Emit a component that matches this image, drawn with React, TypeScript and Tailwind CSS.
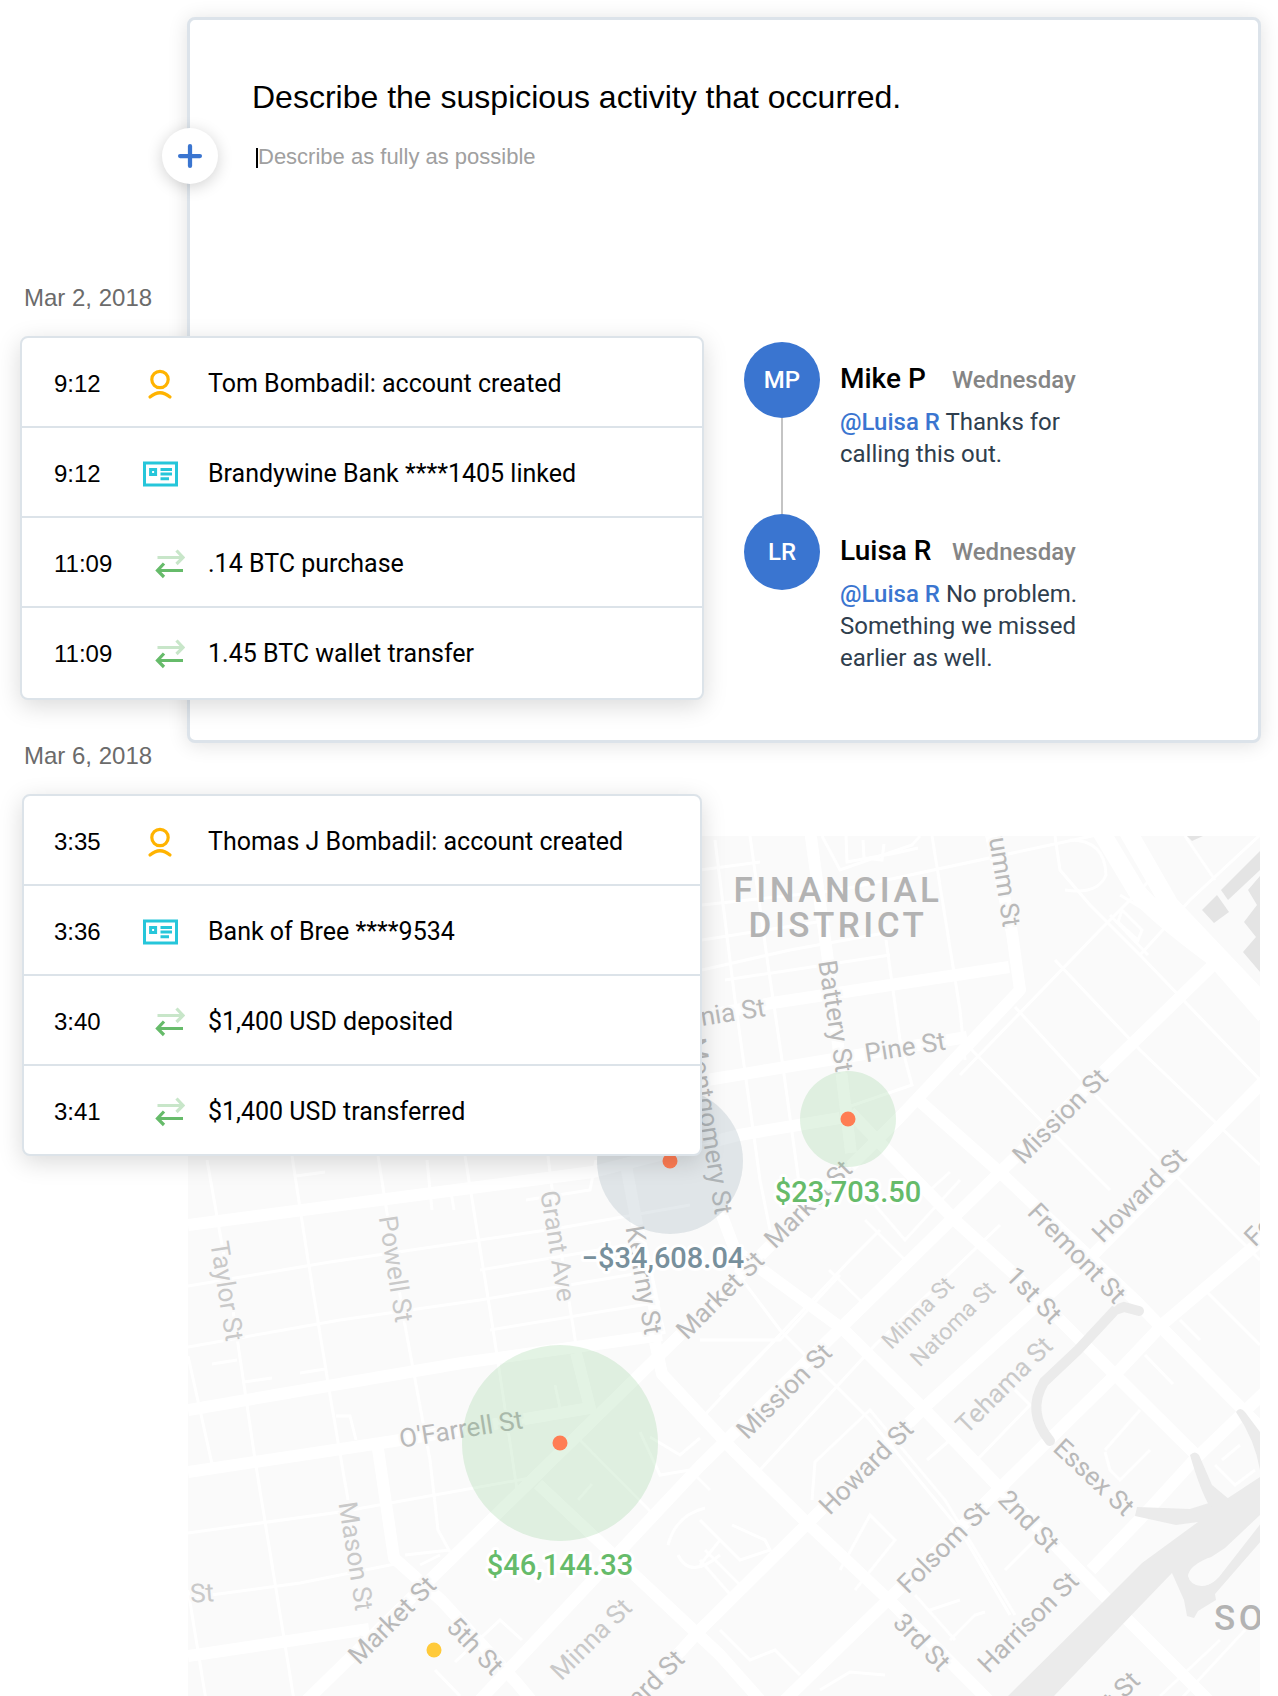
import React from 'react';
import { Plus } from 'lucide-react';

type EventKind = 'account' | 'bank' | 'transfer';

interface TimelineEvent {
    time: string;
    kind: EventKind;
    label: string;
}

interface Comment {
    initials: string;
    author: string;
    day: string;
    mention: string;
    text: string;
}

interface StreetLabel {
    name: string;
    x: number;
    y: number;
    angle: number;
    minor?: boolean;
    small?: boolean;
}

const FIRST_DAY: TimelineEvent[] = [
    { time: '9:12', kind: 'account', label: 'Tom Bombadil: account created' },
    { time: '9:12', kind: 'bank', label: 'Brandywine Bank ****1405 linked' },
    { time: '11:09', kind: 'transfer', label: '.14 BTC purchase' },
    { time: '11:09', kind: 'transfer', label: '1.45 BTC wallet transfer' },
];

const SECOND_DAY: TimelineEvent[] = [
    { time: '3:35', kind: 'account', label: 'Thomas J Bombadil: account created' },
    { time: '3:36', kind: 'bank', label: 'Bank of Bree ****9534' },
    { time: '3:40', kind: 'transfer', label: '$1,400 USD deposited' },
    { time: '3:41', kind: 'transfer', label: '$1,400 USD transferred' },
];

const COMMENTS: Comment[] = [
    {
        initials: 'MP',
        author: 'Mike P',
        day: 'Wednesday',
        mention: '@Luisa R',
        text: 'Thanks for calling this out.',
    },
    {
        initials: 'LR',
        author: 'Luisa R',
        day: 'Wednesday',
        mention: '@Luisa R',
        text: 'No problem. Something we missed earlier as well.',
    },
];

const WIDE_ROADS = [
    'M188 1225L593 1172L739 1135L840 1118',
    'M188 1410L462 1363L662 1335',
    'M188 1472L394 1441L590 1408L576 1353',
    'M188 1656L369 1629',
    'M378 1449L394 1558L442 1601L517 1683L531 1700',
    'M305 1702L676 1339L900 1117L1020 990L1012 933L990 830',
    'M810 830L827 953L851 1153',
    'M695 1018L772 1003L1009 967',
    'M695 1082L840 1058L967 1037',
    'M480 1700L700 1466L955 1216L1215 963',
    'M636 1700L700 1630L811 1520L929 1403L1046 1297L1091 1257L1278 1067',
    'M785 1700L895 1593L995 1493L1113 1377L1164 1323L1270 1233',
    'M1091 1570L1142 1517L1194 1460L1270 1387',
    'M538 1484L640 1580L720 1655L760 1700',
    'M655 1342L662 1374L733 1450L807 1523L892 1603L988 1700',
    'M718 1205L735 1250L844 1330L925 1410L995 1483L1105 1597L1208 1700',
    'M850 1112L877 1140L958 1223L1013 1273L1080 1340L1194 1453',
    'M915 1097L1005 1177L1135 1300L1161 1327L1270 1437',
    'M625 1160L640 1240L660 1335',
];

const THIN_ROADS = [
    'M207 1160L230 1290L256 1466L294 1700',
    'M292 1156L308 1260L330 1395L348 1500',
    'M378 1156L404 1320L430 1460L438 1530L450 1552',
    'M427 1160L432 1210M450 1186L454 1210',
    'M465 1156L490 1310L500 1375L517 1490',
    'M548 1156L556 1220L576 1345',
    'M188 1286L330 1262L560 1228L690 1205',
    'M188 1347L340 1320L480 1300L640 1273',
    'M490 1330L660 1302M480 1270L640 1243',
    'M188 1533L340 1512L530 1478',
    'M188 1598L300 1583L400 1563',
    'M188 1356L212 1464M188 1590L206 1700',
    'M336 1416L350 1416L356 1440',
    'M244 1382L272 1378M300 1373L325 1369M212 1364L237 1360',
    'M296 1176L325 1172M526 1200L590 1190L596 1160',
    'M555 1385L560 1408M578 1500L592 1484',
    'M580 1440L650 1511M650 1437L680 1455L700 1438',
    'M640 1432L660 1475L690 1470L710 1490',
    'M668 1545Q676 1515 705 1508M678 1555Q690 1580 720 1555',
    'M405 1555L450 1550M420 1565L440 1555',
    'M455 1662L500 1620L522 1640M435 1670L460 1696',
    'M702 905L840 890L1050 845L1120 830',
    'M702 970L790 950L890 932M725 980L890 955',
    'M715 840L735 1000L760 1180L770 1230',
    'M750 836L768 965L782 1060L800 1190',
    'M822 836L840 870L912 845L920 836',
    'M846 836L847 862L896 853L918 848',
    'M863 840L864 858L882 860L884 844',
    'M932 836L960 1010L965 1060',
    'M886 940L900 1040L912 1085L845 1108',
    'M702 940L830 920M700 870L760 862',
    'M960 1075L1100 930L1150 880',
    'M1055 836L1060 870L1090 905L1140 955L1260 1080',
    'M1070 840Q1105 840 1106 875Q1098 895 1065 890',
    'M1120 895L1170 925M1110 915L1148 955M1122 910L1142 930L1138 940L1118 922Z',
    'M1055 960L1140 1050L1260 1165',
    'M1015 1007L1100 1100L1210 1210L1260 1260',
    'M970 1048L1060 1140L1110 1190',
    'M1140 955L1190 900L1260 835',
    'M1185 836L1215 880',
    'M898 1155L930 1190L950 1172M875 1205L905 1240L960 1180',
    'M829 1270L865 1305M865 1220L910 1265',
    'M735 1270L780 1330L870 1420L960 1530L1010 1615',
    'M700 1340L780 1340L840 1275M780 1335L720 1395',
    'M700 1420L850 1260L880 1230',
    'M760 1470L875 1345L1000 1225',
    'M812 1500L815 1462L870 1410L945 1500L1015 1615',
    'M840 1570L870 1515L895 1540L855 1590',
    'M927 1460L950 1440M977 1460L1030 1405L1010 1385',
    'M1105 1450L1140 1410M1105 1452L1110 1470L1120 1480L1150 1450',
    'M1145 1355L1173 1384M1180 1320L1200 1340M1205 1290L1260 1345',
    'M1005 1570L1040 1535M1122 1612L1180 1670',
    'M1180 1700L1245 1630M1160 1696L1220 1640',
    'M1222 1460L1240 1445M1215 1465L1235 1485L1255 1470',
    'M915 1595L955 1640M930 1610L960 1600M950 1640L975 1615L985 1612',
    'M700 1520L740 1560L770 1550L765 1540L732 1525',
    'M700 1560L735 1600M705 1550L745 1590M720 1540L700 1565',
    'M720 1630L750 1660L775 1650L800 1675',
    'M700 1640L760 1700M820 1690L850 1672L885 1675',
];

const LABELS: StreetLabel[] = [
    { name: 'Taylor St', x: 227, y: 1291, angle: 81, minor: true },
    { name: 'Powell St', x: 396, y: 1269, angle: 81, minor: true },
    { name: 'Grant Ave', x: 558, y: 1246, angle: 81, minor: true },
    { name: 'Kearny St', x: 644, y: 1280, angle: 80 },
    { name: 'Mason St', x: 356, y: 1556, angle: 81, minor: true },
    { name: "O'Farrell St", x: 461, y: 1429, angle: -9 },
    { name: 'Market St', x: 392, y: 1620, angle: -45 },
    { name: '5th St', x: 475, y: 1646, angle: 46 },
    { name: 'Minna St', x: 591, y: 1639, angle: -45, minor: true },
    { name: 'Howard St', x: 637, y: 1697, angle: -45 },
    { name: 'St', x: 202, y: 1593, angle: -4, minor: true },
    { name: 'Market St', x: 720, y: 1295, angle: -45 },
    { name: 'Market St', x: 808, y: 1204, angle: -45 },
    { name: 'Mission St', x: 1060, y: 1116, angle: -45 },
    { name: 'Howard St', x: 1139, y: 1195, angle: -45 },
    { name: 'Fremont St', x: 1077, y: 1253, angle: 46 },
    { name: '1st St', x: 1034, y: 1295, angle: 46 },
    { name: 'Minna St', x: 917, y: 1312, angle: -45, minor: true, small: true },
    { name: 'Natoma St', x: 952, y: 1323, angle: -45, minor: true, small: true },
    { name: 'Tehama St', x: 1004, y: 1385, angle: -45, minor: true },
    { name: 'Mission St', x: 784, y: 1391, angle: -45 },
    { name: 'Howard St', x: 866, y: 1467, angle: -45 },
    { name: 'Essex St', x: 1094, y: 1477, angle: 43 },
    { name: '2nd St', x: 1029, y: 1521, angle: 46 },
    { name: 'Folsom St', x: 943, y: 1547, angle: -45 },
    { name: '3rd St', x: 922, y: 1642, angle: 46 },
    { name: 'Harrison St', x: 1028, y: 1622, angle: -45 },
    { name: 'Bryant St', x: 1098, y: 1713, angle: -45 },
    { name: 'Folsom St', x: 1290, y: 1200, angle: -45 },
    { name: 'Drumm St', x: 1003, y: 869, angle: 81 },
    { name: 'Battery St', x: 836, y: 1016, angle: 81 },
    { name: 'California St', x: 695, y: 1018, angle: -9 },
    { name: 'Pine St', x: 905, y: 1047, angle: -9 },
    { name: 'Montgomery St', x: 710, y: 1126, angle: 81 },
];

const AccountIcon = () => (
    <svg width="36" height="32" viewBox="0 0 36 32" fill="none" aria-hidden="true">
        <g stroke="#ffb300" strokeWidth="3.2" strokeLinecap="round">
            <circle cx="18" cy="11.5" r="8.2" />
            <path d="M8 29Q18 20.5 28 29" />
        </g>
    </svg>
);

const BankIcon = () => (
    <svg width="36" height="26" viewBox="0 0 36 26" fill="none" aria-hidden="true">
        <g stroke="#26c6da" strokeWidth="3">
            <rect x="2.5" y="2" width="32" height="22" />
            <rect x="8.6" y="8.5" width="5" height="5" />
            <path d="M18.5 8.5H30M18.5 13H30M18.5 17.8H27" />
        </g>
    </svg>
);

const TransferIcon = () => (
    <svg width="30" height="30" viewBox="0 0 30 30" fill="none" aria-hidden="true">
        <g strokeWidth="3.2">
            <path d="M2.5 8.5H28M21.5 1.5L28 8.5L21.5 15" stroke="#c8e6c9" />
            <path d="M28 21.5H2.5M9 14.5L2.5 21.5L9 28" stroke="#66bb6a" />
        </g>
    </svg>
);

const EventIcon: React.FC<{ kind: EventKind }> = ({ kind }) => {
    switch (kind) {
        case 'account':
            return <AccountIcon />;
        case 'bank':
            return <BankIcon />;
        default:
            return <TransferIcon />;
    }
};

const EventList: React.FC<{ events: TimelineEvent[] }> = ({ events }) => (
    <ul>
        {events.map((event) => (
            <li
                key={event.label}
                className="box-content flex h-[84px] items-center border-b-2 border-[#dce3e9] pt-1 pl-[30px] last:border-b-0"
            >
                <time className="w-[88px] shrink-0 font-['Liberation_Sans',sans-serif] text-2xl">
                    {event.time}
                </time>
                <span
                    className={`flex w-[43px] shrink-0 ${
                        event.kind === 'transfer' ? 'justify-end' : 'justify-start'
                    }`}
                >
                    <EventIcon kind={event.kind} />
                </span>
                <span className="ml-[23px] text-[25px]">{event.label}</span>
            </li>
        ))}
    </ul>
);

const CommentThread = () => (
    <ol className="ml-[554px]">
        {COMMENTS.map((comment, index) => (
            <li key={comment.author} className="flex gap-5">
                <div className="flex flex-col items-center">
                    <div className="flex size-[76px] shrink-0 items-center justify-center rounded-full bg-[#3a75d0] text-2xl font-medium text-white">
                        {comment.initials}
                    </div>
                    {index < COMMENTS.length - 1 && (
                        <div className="w-[2px] grow bg-[#c4c4c4]" />
                    )}
                </div>
                <div className="h-[172px] pt-[19px]">
                    <div className="flex items-baseline leading-9">
                        <h2 className="w-28 text-[28px] font-medium">{comment.author}</h2>
                        <span className="text-2xl font-medium text-[#858585]">
                            {comment.day}
                        </span>
                    </div>
                    <p className="mt-[9px] w-60 text-2xl leading-8 text-[#2f3e4d]">
                        <a href="#luisa" className="font-medium text-[#3a75d0]">
                            {comment.mention}
                        </a>{' '}
                        {comment.text}
                    </p>
                </div>
            </li>
        ))}
    </ol>
);

const ActivityMap = () => (
    <svg
        viewBox="188 836 1072 860"
        preserveAspectRatio="xMinYMin slice"
        className="h-[860px] w-full bg-[#fafafa]"
        role="img"
        aria-label="Map of account activity"
    >
        <g fill="none" stroke="#fff" strokeWidth="3">
            {THIN_ROADS.map((d) => (
                <path key={d} d={d} />
            ))}
        </g>
        <g fill="none" stroke="#fff" strokeWidth="12" strokeLinejoin="round">
            {WIDE_ROADS.map((d) => (
                <path key={d} d={d} />
            ))}
        </g>
        <path
            d="M1100 830L1136 890Q1150 910 1215 958L1265 1015M1127 830L1170 905L1265 1005"
            fill="none"
            stroke="#fff"
            strokeWidth="18"
        />

        {/* piers */}
        <g fill="#e4e4e4">
            <path d="M1260 851L1221 890L1228 900L1260 870Z" />
            <path d="M1202 910L1217 895L1229 912L1214 923Z" />
            <path d="M1260 876L1248 890L1257 905L1244 922L1256 937L1243 952L1260 972Z" />
            <path d="M1187 836L1192 841L1203 836Z" />
        </g>

        {/* freeway and ramps */}
        <g fill="#ebebeb">
            <path d="M1008 1696L1098 1607L1142 1563L1198 1522L1176 1525L1135 1516L1137 1507L1190 1509L1212 1502L1228 1498L1260 1477V1515L1225 1548L1190 1571L1194 1580Q1205 1592 1219 1577L1262 1522L1262 1540L1215 1594L1216 1600L1198 1611L1194 1618L1187 1616L1184 1600L1172 1573L1120 1627L1054 1696Z" />
            <path d="M1190 1455Q1195 1450 1199 1455L1212 1485L1230 1500L1210 1507Q1200 1490 1190 1455Z" />
            <path d="M1236 1412Q1240 1406 1245 1412L1260 1432V1470Q1255 1440 1236 1412Z" />
        </g>
        <path
            d="M1139 1311L1124 1307L1115 1310L1078 1350L1044 1382Q1026 1412 1050 1441"
            fill="none"
            stroke="#ebebeb"
            strokeWidth="10"
            strokeLinecap="round"
        />
        <path
            d="M1188 1576Q1189 1566 1208 1558L1218 1556L1226 1567Q1213 1587 1201 1586Q1190 1585 1188 1576Z"
            fill="#fafafa"
        />

        <g textAnchor="middle" stroke="#fafafa" strokeWidth="4" paintOrder="stroke">
            {LABELS.map(({ name, x, y, angle, minor, small }) => (
                <text
                    key={`${name}-${x}`}
                    className={small ? 'text-[23px]' : 'text-[26px]'}
                    x={x}
                    y={y}
                    dy="9"
                    transform={`rotate(${angle} ${x} ${y})`}
                    fill={minor ? '#c9c9c9' : '#b9b9b9'}
                >
                    {name}
                </text>
            ))}
        </g>
        <g className="text-[35px] font-medium tracking-widest" fill="#b3b3b3">
            <text x="838" y="902" textAnchor="middle">
                FINANCIAL
            </text>
            <text x="838" y="937" textAnchor="middle">
                DISTRICT
            </text>
            <text x="1214" y="1630">
                SOMA
            </text>
        </g>

        <circle cx="670" cy="1161" r="73" fill="#90a4ae" fillOpacity="0.24" />
        <circle cx="848" cy="1119" r="48" fill="#66bb6a" fillOpacity="0.18" />
        <circle cx="560" cy="1443" r="98" fill="#66bb6a" fillOpacity="0.18" />
        <g fill="#ff7d54">
            <circle cx="670" cy="1161" r="7.5" />
            <circle cx="848" cy="1119" r="7.5" />
            <circle cx="560" cy="1443" r="7.5" />
        </g>
        <circle cx="434" cy="1650" r="7.5" fill="#ffca3a" />

        <g
            className="text-[29px] font-medium"
            textAnchor="middle"
            stroke="#fff"
            strokeWidth="6"
            strokeLinejoin="round"
            paintOrder="stroke"
        >
            <text x="848" y="1202" fill="#66bb6a">
                $23,703.50
            </text>
            <text x="663" y="1268" fill="#78909c">
                −$34,608.04
            </text>
            <text x="560" y="1575" fill="#66bb6a">
                $46,144.33
            </text>
        </g>
    </svg>
);

const App: React.FC = () => (
    <main className="grid grid-cols-[187px_1fr_17px] overflow-hidden bg-white pt-[17px] font-[Roboto,sans-serif] text-black">
        <section className="relative col-start-2 row-start-1 rounded-lg border-3 border-[#dce3ea] bg-white pt-[57px] pb-[54px] shadow-[0_2px_20px_rgba(0,0,0,0.12)]">
            <button
                type="button"
                aria-label="Add to report"
                className="absolute top-[108px] -left-7 flex size-14 items-center justify-center rounded-full bg-white text-[#3a75d0] shadow-[0_3px_16px_rgba(0,0,0,0.18)]"
            >
                <Plus size={34} strokeWidth={3} />
            </button>
            <div className="h-[265px] pl-[62px] font-['Liberation_Sans',sans-serif]">
                <label htmlFor="activity" className="block text-[32px] leading-10">
                    Describe the suspicious activity that occurred.
                </label>
                <div className="mt-[31px] flex pl-1">
                    <span className="h-5 w-[2px] bg-black" />
                    <textarea
                        id="activity"
                        rows={3}
                        placeholder="Describe as fully as possible"
                        className="-mt-[5px] w-full resize-none bg-transparent text-[22px] leading-7 outline-none placeholder:text-[#a0a0a0]"
                    />
                </div>
            </div>
            <CommentThread />
        </section>

        <section className="col-start-2 row-start-2 mx-px mt-[93px]">
            <ActivityMap />
        </section>

        <div className="z-10 col-start-1 col-end-3 row-start-1 row-end-3 mt-[265px] ml-5 flex w-[684px] flex-col gap-10 self-start">
            <section>
                <h3 className="mb-[22px] ml-1 font-['Liberation_Sans',sans-serif] text-2xl leading-8 text-[#6b6b6b]">
                    Mar 2, 2018
                </h3>
                <div className="rounded-lg border-2 border-[#dce3e9] bg-white pb-[2px] shadow-[0_6px_24px_rgba(0,0,0,0.15)] [&_li]:pl-8">
                    <EventList events={FIRST_DAY} />
                </div>
            </section>
            <section>
                <h3 className="mb-[22px] ml-1 font-['Liberation_Sans',sans-serif] text-2xl leading-8 text-[#6b6b6b]">
                    Mar 6, 2018
                </h3>
                <div className="mx-[2px] rounded-lg border-2 border-[#dce3e9] bg-white shadow-[0_6px_24px_rgba(0,0,0,0.15)]">
                    <EventList events={SECOND_DAY} />
                </div>
            </section>
        </div>
    </main>
);

export default App;
